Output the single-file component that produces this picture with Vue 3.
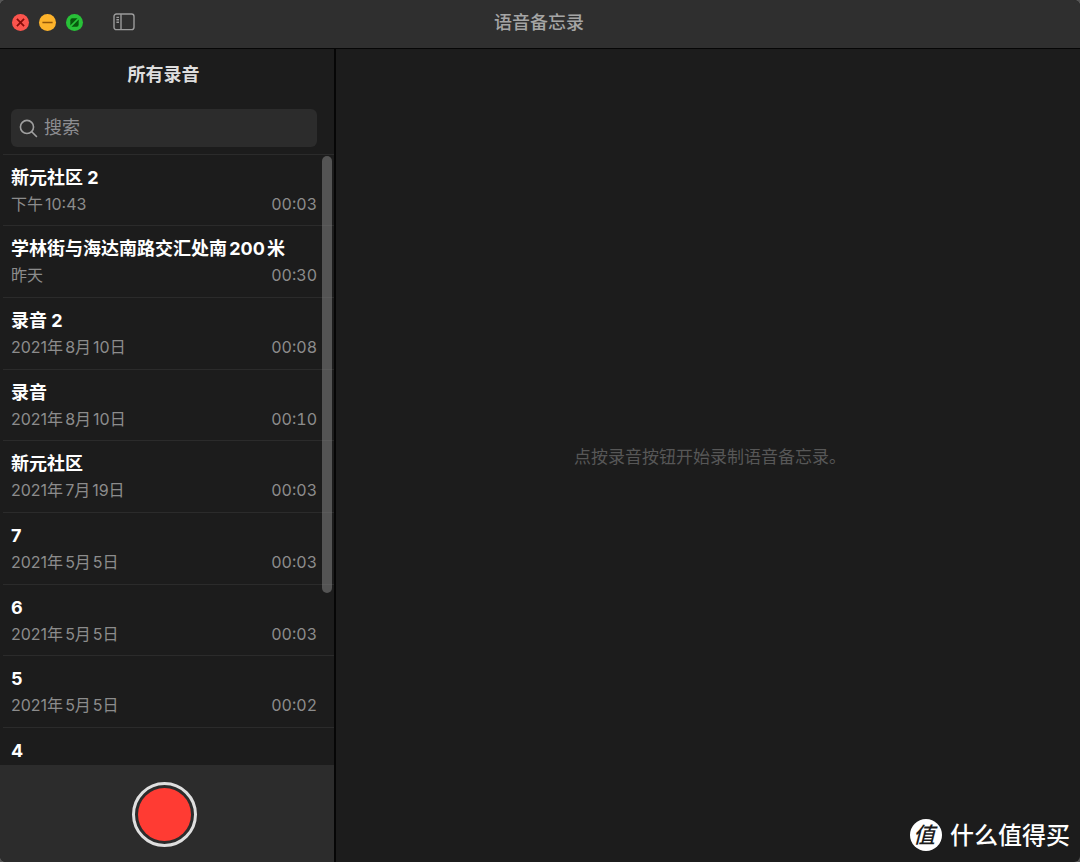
<script setup>
import { ref } from 'vue'

const query = ref('')
const recordings = [
  { title: '新元社区 2', date: ['下午', '10:43'], length: '00:03' },
  { title: '学林街与海达南路交汇处南200米', date: ['昨天'], length: '00:30' },
  { title: '录音 2', date: ['2021年', '8月', '10日'], length: '00:08' },
  { title: '录音', date: ['2021年', '8月', '10日'], length: '00:10' },
  { title: '新元社区', date: ['2021年', '7月', '19日'], length: '00:03' },
  { title: '7', date: ['2021年', '5月', '5日'], length: '00:03' },
  { title: '6', date: ['2021年', '5月', '5日'], length: '00:03' },
  { title: '5', date: ['2021年', '5月', '5日'], length: '00:02' },
  { title: '4' },
]
</script>

<template>
  <div class="window">
    <header class="titlebar">
      <div class="controls">
        <button class="light close" aria-label="关闭">
          <svg viewBox="0 0 18 18"><path d="M5.2 5.2l7.6 7.6M12.8 5.2l-7.6 7.6" /></svg>
        </button>
        <button class="light minimize" aria-label="最小化">
          <svg viewBox="0 0 18 18"><path d="M3.6 9h10.8" /></svg>
        </button>
        <button class="light zoom" aria-label="缩放">
          <svg viewBox="0 0 18 18">
            <rect x="4.6" y="4.6" width="8.8" height="8.8" rx="2" />
            <path d="M4.4 13.6l9.2-9.2" />
          </svg>
        </button>
        <button class="toggle" aria-label="边栏">
          <svg viewBox="0 0 22 18">
            <rect x="1" y="1" width="20" height="15.6" rx="2.4" />
            <path d="M8 1v15.6M3.4 4.4h2.6M3.4 6.8h2.6M3.4 9.2h2.6" />
          </svg>
        </button>
      </div>
      <h1>语音备忘录</h1>
    </header>

    <div class="body">
      <aside class="sidebar">
        <h2>所有录音</h2>
        <label class="search">
          <svg viewBox="0 0 20 20" aria-hidden="true">
            <circle cx="8.4" cy="8.4" r="6.9" />
            <path d="M13.4 13.4l5 5" />
          </svg>
          <input v-model="query" type="search" placeholder="搜索" aria-label="搜索" />
        </label>
        <div class="scroller">
          <ul class="list">
            <li v-for="(item, i) in recordings" :key="i">
              <h3>{{ item.title }}</h3>
              <p v-if="item.date">
                <span class="date"><span v-for="part in item.date" :key="part">{{ part }}</span></span>
                <span class="length">{{ item.length }}</span>
              </p>
            </li>
          </ul>
          <div class="thumb"></div>
        </div>
        <footer class="recorder">
          <button class="record" aria-label="录音"></button>
        </footer>
      </aside>

      <main class="detail">
        <p>点按录音按钮开始录制语音备忘录。</p>
        <div class="brand">
          <span class="badge">值</span>
          <span class="name">什么值得买</span>
        </div>
      </main>
    </div>
  </div>
</template>

<style>
body {
  background: #555;
}
</style>

<style scoped>
.window {
  display: flex;
  flex-direction: column;
  height: 100vh;
  overflow: hidden;
  border-radius: 6px;
  background: #1c1c1c;
  color: #fff;
  font-family: Inter, "Noto Sans CJK SC", sans-serif;
}
h1, h2, h3, p, ul {
  margin: 0;
  padding: 0;
}
button {
  padding: 0;
  border: 0;
  background: none;
}
svg {
  display: block;
  fill: none;
}
.titlebar {
  display: grid;
  grid-template-columns: 1fr auto 1fr;
  align-items: center;
  height: 49px;
  padding: 0 14px 4px 12px;
  box-sizing: border-box;
  border-bottom: 1px solid #060606;
  background: #2f2f2f;
}
.titlebar h1 {
  padding-top: 2px;
  color: #a5a5a5;
  font-size: 18px;
  font-weight: 500;
  line-height: 24px;
}
.controls {
  display: flex;
  align-items: center;
  gap: 10px;
}
.light {
  width: 17px;
  height: 17px;
  border-radius: 50%;
}
.light svg {
  stroke-width: 1.8;
}
.close {
  background: #fb544d;
  stroke: #860b08;
}
.minimize {
  background: #fdb32b;
  stroke: #925609;
}
.zoom {
  background: #28c138;
}
.zoom rect {
  fill: #07570d;
}
.zoom path {
  stroke: #28c138;
}
.toggle {
  width: 22px;
  height: 18px;
  margin-left: 20px;
  stroke: #9b9b9b;
}
.toggle svg {
  stroke-width: 1.4;
}
.body {
  display: flex;
  flex: 1;
  min-height: 0;
}
.sidebar {
  display: flex;
  flex-direction: column;
  flex: none;
  width: 336px;
  box-sizing: border-box;
  border-right: 2px solid #060606;
}
.sidebar h2 {
  padding: 14px 7px 22px 0;
  color: #dedede;
  font-size: 18px;
  font-weight: 700;
  line-height: 24px;
  text-align: center;
}
.search {
  display: flex;
  align-items: center;
  gap: 6px;
  height: 38px;
  margin: 0 17px 7px 11px;
  padding: 0 8px;
  box-sizing: border-box;
  border-radius: 6px;
  background: #2c2c2c;
}
.search svg {
  width: 19px;
  height: 19px;
  stroke: #a0a0a0;
  stroke-width: 1.7;
  stroke-linecap: round;
}
.search input {
  flex: 1;
  min-width: 0;
  padding: 0;
  border: 0;
  outline: 0;
  background: none;
  color: #fff;
  font: inherit;
  font-size: 18px;
  line-height: 24px;
}
.search input::placeholder {
  color: #8e8e92;
}
.scroller {
  position: relative;
  flex: 1;
  min-height: 0;
  overflow: hidden;
}
.list {
  display: grid;
  grid-auto-rows: 71px 72px 72px;
  margin-left: 3px;
  list-style: none;
}
.list li {
  padding: 11px 17px 0 8px;
  border-top: 1px solid #2b2b2b;
}
.list h3 {
  font-size: 18px;
  font-weight: 700;
  line-height: 24px;
  white-space: nowrap;
  text-autospace: normal;
}
.list p {
  display: flex;
  justify-content: space-between;
  padding-top: 2px;
  color: #8c8c8c;
  font-size: 16px;
  line-height: 24px;
}
.date {
  display: flex;
  gap: 2px;
}
.length {
  font-variant-numeric: tabular-nums;
}
.thumb {
  position: absolute;
  top: 2px;
  right: 2px;
  width: 10px;
  height: 437px;
  border-radius: 5px;
  background: rgba(140, 140, 140, 0.5);
}
.recorder {
  display: flex;
  justify-content: center;
  align-items: center;
  height: 97px;
  padding: 2px 6px 0 0;
  box-sizing: border-box;
  background: #2c2c2c;
}
.record {
  width: 65px;
  height: 65px;
  padding: 3px;
  border: 3px solid #dfdfdf;
  border-radius: 50%;
  background: #ff3b33 content-box;
}
.detail {
  position: relative;
  display: flex;
  flex: 1;
  align-items: center;
  justify-content: center;
}
.detail p {
  padding: 2px 0 0 4px;
  color: #575757;
  font-size: 17px;
  line-height: 24px;
}
.brand {
  position: absolute;
  right: 10px;
  bottom: 11px;
  display: flex;
  align-items: center;
  gap: 8px;
  font-family: "Noto Sans CJK SC", sans-serif;
  font-size: 24px;
  font-weight: 500;
  line-height: 28px;
}
.badge {
  width: 32px;
  height: 32px;
  padding-right: 4px;
  box-sizing: border-box;
  border-radius: 50%;
  background: #fff;
  color: #1c1c1c;
  font-size: 22px;
  font-style: italic;
  text-align: center;
}
.name {
  padding-bottom: 2px;
}
</style>
